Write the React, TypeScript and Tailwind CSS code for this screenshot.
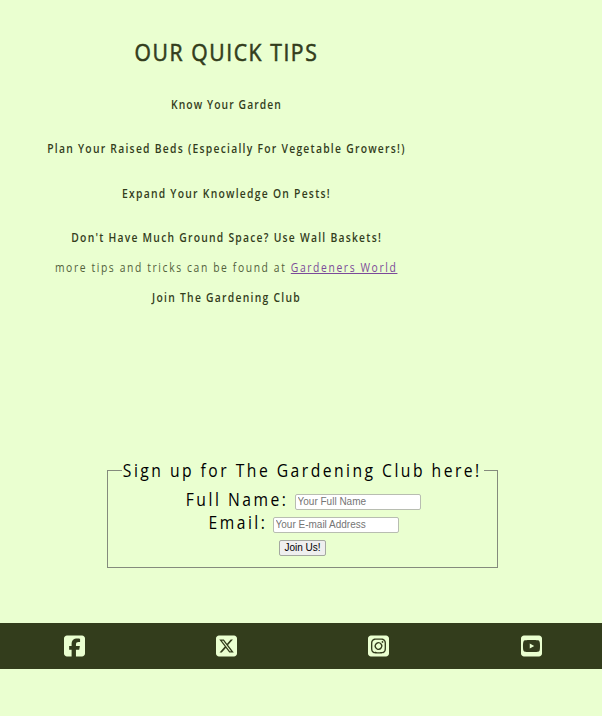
import { FaSquareFacebook, FaSquareXTwitter, FaSquareInstagram, FaSquareYoutube } from "react-icons/fa6";

export default function App() {
  return (
    <div className="flex h-[716px] w-[602px] flex-col overflow-hidden bg-[#eaffd0] font-['Open_Sans','Noto_Sans',sans-serif] text-[#333d1c]">
      <section className="flex h-[460px] w-[453px] flex-col items-center whitespace-nowrap pt-[35px] text-[12px] leading-4 font-semibold">
        <h2 className="h-8 scale-x-[.88] text-[24px] leading-[33px] font-normal tracking-[1.8px] [-webkit-text-stroke:0.6px_#333d1c]">OUR QUICK TIPS</h2>
        <h4 className="mt-[30px] scale-x-[.86] tracking-[1.27px]">Know Your Garden</h4>
        <h4 className="mt-[28px] scale-x-[.86] tracking-[1.47px]">Plan Your Raised Beds (Especially For Vegetable Growers!)</h4>
        <h4 className="mt-[29px] scale-x-[.86] tracking-[1.47px]">Expand Your Knowledge On Pests!</h4>
        <h4 className="mt-[28px] scale-x-[.86] tracking-[1.45px]">Don't Have Much Ground Space? Use Wall Baskets!</h4>
        <p className="mt-[14px] scale-x-[.86] font-normal tracking-[1.88px] text-[#53613c]">
          more tips and tricks can be found at <a className="text-[#7b4a99] underline">Gardeners World</a>
        </p>
        <h4 className="mt-[14px] scale-x-[.86] tracking-[1.48px]">Join The Gardening Club</h4>
      </section>
      <form className="h-[163px] pl-[107px]">
        <fieldset className="h-[108px] w-[391px] border border-[#858b7d] text-[18px] text-black">
          <legend className="mx-auto flex h-[20px] w-[362px] justify-center leading-[21px] whitespace-nowrap tracking-[2.85px]">
            <span className="shrink-0 scale-x-[.87]">Sign up for The Gardening Club here!</span>
          </legend>
          <div className="mt-[8px] flex h-[23px] items-center justify-center">
            <label className="flex w-[106px] justify-center leading-[23px] whitespace-nowrap tracking-[2.9px]"><span className="shrink-0 scale-x-[.87]">Full Name:</span></label>
            <input className="relative top-[2px] ml-[4px] h-4 w-[126px] rounded-[2px] border border-[#b8bdb1] bg-white px-[2px] font-['Liberation_Sans',sans-serif] text-[10px] placeholder:text-[#757575]" placeholder="Your Full Name" />
          </div>
          <div className="flex h-[23px] items-center justify-center">
            <label className="flex w-[62px] justify-center leading-[23px] whitespace-nowrap tracking-[2.9px]"><span className="shrink-0 scale-x-[.87]">Email:</span></label>
            <input className="relative top-[2px] ml-[4px] h-4 w-[126px] rounded-[2px] border border-[#b8bdb1] bg-white px-[2px] font-['Liberation_Sans',sans-serif] text-[10px] placeholder:text-[#757575]" placeholder="Your E-mail Address" />
          </div>
          <button type="button" className="mx-auto mt-[6px] block h-4 w-[47px] rounded-[2px] border border-[#a4a8a0] bg-[#efefef] font-['Liberation_Sans',sans-serif] text-[10px] leading-[14px] whitespace-nowrap">Join Us!</button>
        </fieldset>
      </form>
      <footer className="flex h-[46px] items-center bg-[#333d1c] pl-16 text-[24px] text-[#eaffd0]">
        <div className="w-[152px]"><FaSquareFacebook className="w-[21px]" /></div>
        <div className="w-[152px]"><FaSquareXTwitter className="w-[21px]" /></div>
        <div className="w-[153px]"><FaSquareInstagram className="w-[21px]" /></div>
        <FaSquareYoutube className="w-[21px]" />
      </footer>
    </div>
  );
}
